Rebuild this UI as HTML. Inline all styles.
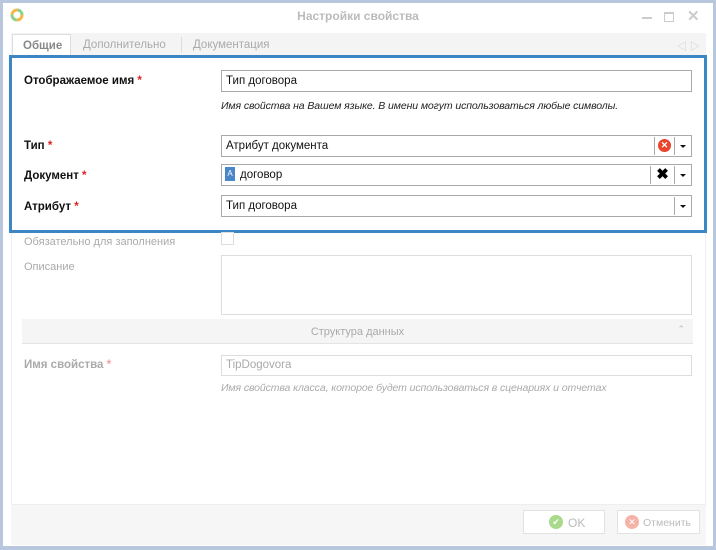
<!DOCTYPE html>
<html><head><meta charset="utf-8"><style>
*{box-sizing:border-box;margin:0;padding:0}
body{width:716px;height:550px;background:#b9c7de;font-family:"Liberation Sans","Noto Sans CJK SC",sans-serif;font-size:12px;position:relative;overflow:hidden}
.win{position:absolute;left:3px;top:3px;width:710px;height:543px;background:#fff}
.abs{position:absolute}
.lbl{position:absolute;left:24px;font-weight:bold;color:#111;font-size:11.5px}
.lbl b{color:#e02020;font-weight:bold}
.inp{position:absolute;left:221px;width:471px;height:22px;border:1px solid #aaa;background:#fff;padding:0 4px;line-height:20px;font-size:11.5px;color:#111}
.dd{position:absolute;right:1px;top:1px;width:16px;height:18px;border-left:1px solid #aaa}
.dd:after{content:"";position:absolute;left:5px;top:8px;border-left:3px solid transparent;border-right:3px solid transparent;border-top:3px solid #111}
.gl{position:absolute;left:24px;color:#aaa}
.hint{position:absolute;left:221px;font-style:italic;font-size:10.5px;letter-spacing:-0.1px}
</style></head><body>
<div class="win">
 <svg class="abs" style="left:7px;top:5px" width="14" height="14" viewBox="0 0 14 14"><circle cx="7" cy="7" r="5" fill="none" stroke="#f5b74a" stroke-width="3" stroke-dasharray="8 8"/><circle cx="7" cy="7" r="5" fill="none" stroke="#8fd08c" stroke-width="3" stroke-dasharray="8 8" stroke-dashoffset="8"/></svg>
 <div class="abs" style="left:0;width:710px;top:6px;text-align:center;color:#bbb;font-weight:bold;font-size:12px">Настройки свойства</div>
 <div class="abs" style="left:639px;top:14px;width:10px;height:2px;background:#ccc"></div>
 <div class="abs" style="left:661px;top:9px;width:10px;height:10px;border:1px solid #ccc;border-top-width:2px"></div>
 <div class="abs" style="left:684px;top:4px;color:#ccc;font-size:15px;font-weight:bold">✕</div>
 <div class="abs" style="left:8px;top:30px;width:695px;height:22px;background:#f4f4f4"></div>
 <div class="abs" style="left:9px;top:31px;width:59px;height:22px;background:#fff;border:1px solid #ddd;border-bottom:none;color:#888;font-weight:bold;padding:5px 0 0 10px;font-size:11.5px">Общие</div>
 <div class="abs" style="left:80px;top:36px;color:#aaa;font-size:11.5px">Дополнительно</div>
 <div class="abs" style="left:178px;top:34px;width:1px;height:16px;background:#ddd"></div>
 <div class="abs" style="left:190px;top:36px;color:#aaa;font-size:11.5px">Документация</div>
 <div class="abs" style="left:674px;top:35px;color:#ccc;font-size:10px">◁ ▷</div>
 <div class="abs" style="left:8px;top:52px;width:695px;height:450px;border:1px solid #eee;border-top:none"></div>
 <div class="abs" style="left:6px;top:52px;width:698px;height:178px;border:3px solid #3b87c6"></div>
 <div class="lbl" style="top:72px;left:21px">Отображаемое имя <b>*</b></div>
 <div class="inp" style="top:67px;left:218px">Тип договора</div>
 <div class="hint" style="top:97px;left:218px;color:#222">Имя свойства на Вашем языке. В имени могут использоваться любые символы.</div>
 <div class="lbl" style="top:137px;left:21px">Тип <b>*</b></div>
 <div class="inp" style="top:132px;left:218px">Атрибут документа<div class="dd"></div><div class="abs" style="right:17px;top:1px;width:20px;height:18px;border-left:1px solid #aaa"><div class="abs" style="left:3px;top:2px;width:13px;height:13px;border-radius:50%;background:#e8452c;color:#fff;font-size:9px;text-align:center;line-height:13px;font-weight:bold">✕</div></div></div>
 <div class="lbl" style="top:167px;left:21px">Документ <b>*</b></div>
 <div class="inp" style="top:161px;left:218px;padding-left:18px">договор<div class="abs" style="left:3px;top:2px;width:10px;height:14px;background:#4a87c8;color:#fff;font-size:8px;text-align:center;line-height:14px">A</div><div class="dd"></div><div class="abs" style="right:17px;top:1px;width:24px;height:18px;border-left:1px solid #aaa;font-size:15px;font-weight:bold;text-align:center;line-height:18px;color:#000">✖</div></div>
 <div class="lbl" style="top:198px;left:21px">Атрибут <b>*</b></div>
 <div class="inp" style="top:192px;left:218px">Тип договора<div class="dd"></div></div>
 <div class="gl" style="top:233px;left:21px;font-size:11px">Обязательно для заполнения</div>
 <div class="abs" style="left:218px;top:229px;width:13px;height:13px;border:1px solid #ddd"></div>
 <div class="gl" style="top:258px;left:21px;font-size:11px">Описание</div>
 <div class="abs" style="left:218px;top:252px;width:471px;height:60px;border:1px solid #ddd"></div>
 <div class="abs" style="left:19px;top:316px;width:671px;height:25px;background:#f5f5f5;border-bottom:1px solid #e4e4e4;text-align:center;color:#aaa;padding-top:7px;font-size:11px">Структура данных<span class="abs" style="right:8px;top:5px;color:#bbb;font-size:9px">⌃</span></div>
 <div class="gl" style="top:356px;left:21px;font-weight:bold;color:#aaa;font-size:11.5px">Имя свойства <span style="color:#f4a0a0">*</span></div>
 <div class="inp" style="top:352px;left:218px;border-color:#ddd;color:#aaa;height:21px;line-height:19px">TipDogovora</div>
 <div class="hint" style="top:379px;left:218px;color:#aaa">Имя свойства класса, которое будет использоваться в сценариях и отчетах</div>
 <div class="abs" style="left:8px;top:502px;width:695px;height:40px;background:#f6f6f6"></div>
 <div class="abs" style="left:520px;top:507px;width:82px;height:24px;border:1px solid #e2e2e2;background:#fff;color:#bbb;padding:5px 0 0 44px">OK<div class="abs" style="left:25px;top:4px;width:14px;height:14px;border-radius:50%;background:#a9d98a;color:#fff;font-size:9px;text-align:center;line-height:14px">✔</div></div>
 <div class="abs" style="left:614px;top:507px;width:83px;height:24px;border:1px solid #e2e2e2;background:#fff;color:#bbb;padding:6px 0 0 25px;font-size:10.5px;white-space:nowrap">Отменить<div class="abs" style="left:7px;top:4px;width:14px;height:14px;border-radius:50%;background:#f5b3a8;color:#fff;font-size:9px;text-align:center;line-height:14px">✕</div></div>
</div>
</body></html>
